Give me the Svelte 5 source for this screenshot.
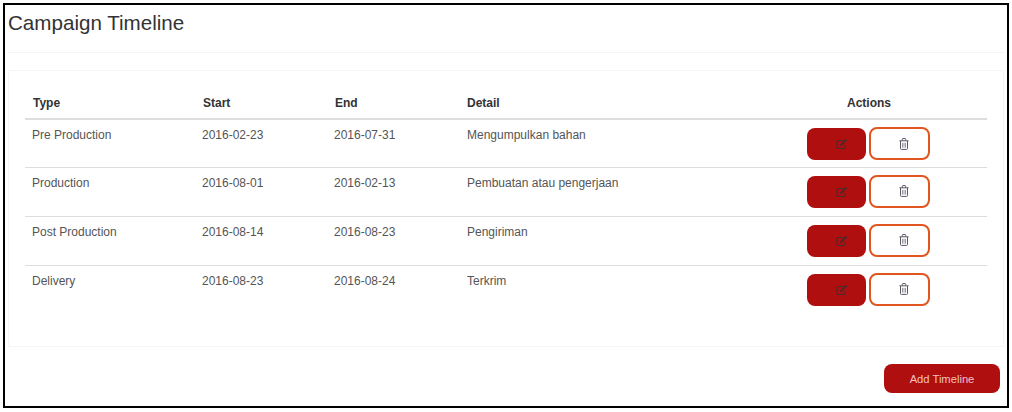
<script>
	const rows = [
		{ type: 'Pre Production', start: '2016-02-23', end: '2016-07-31', detail: 'Mengumpulkan bahan' },
		{ type: 'Production', start: '2016-08-01', end: '2016-02-13', detail: 'Pembuatan atau pengerjaan' },
		{ type: 'Post Production', start: '2016-08-14', end: '2016-08-23', detail: 'Pengiriman' },
		{ type: 'Delivery', start: '2016-08-23', end: '2016-08-24', detail: 'Terkrim' }
	];
</script>

<div class="frame">
	<header class="head">
		<h1>Campaign Timeline</h1>
	</header>

	<section class="card">
		<table>
			<thead>
				<tr>
					<th class="c-type">Type</th>
					<th class="c-start">Start</th>
					<th class="c-end">End</th>
					<th class="c-detail">Detail</th>
					<th class="c-actions">Actions</th>
				</tr>
			</thead>
			<tbody>
				{#each rows as row}
					<tr>
						<td>{row.type}</td>
						<td>{row.start}</td>
						<td>{row.end}</td>
						<td class="detail">{row.detail}</td>
						<td class="actions">
							<button class="btn edit" type="button" aria-label="Edit">
								<svg viewBox="0 0 12 12" width="12" height="12" fill="none" stroke="#4a2a2a" stroke-width="1.1">
									<path d="M9 7v2.4a1.1 1.1 0 0 1-1.1 1.1H2.1A1.1 1.1 0 0 1 1 9.400V3.600a1.100 1.100 0 0 1 1.100-1.100H7" />
									<path d="M4.500 6.200 9.800 1l1.200 1.200-5.300 5.200-1.500.3z" fill="#4a2a2a" stroke-width="0.5" />
								</svg>
							</button>
							<button class="btn del" type="button" aria-label="Delete">
								<svg viewBox="0 0 10 12" width="10" height="12" fill="none" stroke="#5a5a62" stroke-width="1">
									<path d="M0.500 2.800h9M3.300 2.600V1.300q0-.7.700-.7h2q.7 0 .7.700v1.300" />
									<path d="M1.500 2.800v7.700q0 .9.900.9h5.200q.9 0 .9-.9V2.800" />
									<path d="M3.500 4.800v4.800M5 4.800v4.800M6.500 4.800v4.800" stroke="#9a9aa4" />
								</svg>
							</button>
						</td>
					</tr>
				{/each}
			</tbody>
		</table>
	</section>

	<footer class="foot">
		<button class="btn add" type="button">Add Timeline</button>
	</footer>
</div>

<style>
	:global(body) {
		background: #fff;
	}

	.frame {
		box-sizing: border-box;
		width: 1006px;
		height: 405px;
		margin: 3px;
		border: 2px solid #000;
		display: flex;
		flex-direction: column;
		font-family: 'Liberation Sans', Arial, sans-serif;
		font-size: 12px;
		color: #555;
	}

	.head {
		height: 47px;
		margin: 0 3px;
		border-bottom: 1px solid #f4f4f4;
	}

	h1 {
		margin: 0;
		padding-top: 6px;
		font-size: 20.600px;
		line-height: 24px;
		font-weight: 400;
		color: #333;
	}

	.card {
		height: 277px;
		margin: 17px 3px 0;
		padding: 17px 16px 0;
		border: 1px solid #f5f5f5;
		box-sizing: border-box;
	}

	table {
		width: 962px;
		border-collapse: collapse;
		table-layout: fixed;
	}

	th {
		box-sizing: border-box;
		height: 31px;
		padding: 0 8px;
		text-align: left;
		font-weight: 700;
		color: #333;
		border-bottom: 2px solid #ddd;
	}

	.c-type {
		width: 170px;
	}
	.c-start,
	.c-end {
		width: 132px;
	}
	.c-detail {
		width: 292px;
	}
	th.c-actions {
		text-align: center;
	}

	td {
		height: 49px;
		box-sizing: border-box;
		padding: 7px 7px 0;
		vertical-align: top;
		line-height: 17px;
		border-bottom: 1px solid #ddd;
	}

	tbody tr:first-child td {
		height: 48px;
	}

	td.detail {
		padding-left: 8px;
	}

	tbody tr:last-child td {
		border-bottom: 0;
	}

	td.actions {
		padding: 7px 0 0 56px;
		white-space: nowrap;
	}

	.actions .btn {
		vertical-align: top;
		height: 32px;
		padding: 0 0 0 10px;
		box-sizing: border-box;
	}

	.btn {
		display: inline-flex;
		align-items: center;
		justify-content: center;
		font-family: inherit;
		border-radius: 8px;
		cursor: pointer;
	}

	.edit {
		width: 59px;
		margin-top: 1px;
		background: #b00f0f;
		border: 0;
	}

	.actions .del {
		width: 61px;
		height: 33px;
		padding-left: 8px;
		background: #fff;
		border: 2px solid #e2551f;
	}

	.foot {
		display: flex;
		justify-content: flex-end;
		padding: 17px 7px 0 0;
	}

	.add {
		width: 116px;
		height: 29px;
		background: #b00f0f;
		border: 0;
		color: #f2c0c0;
		font-size: 11.200px;
	}
</style>
